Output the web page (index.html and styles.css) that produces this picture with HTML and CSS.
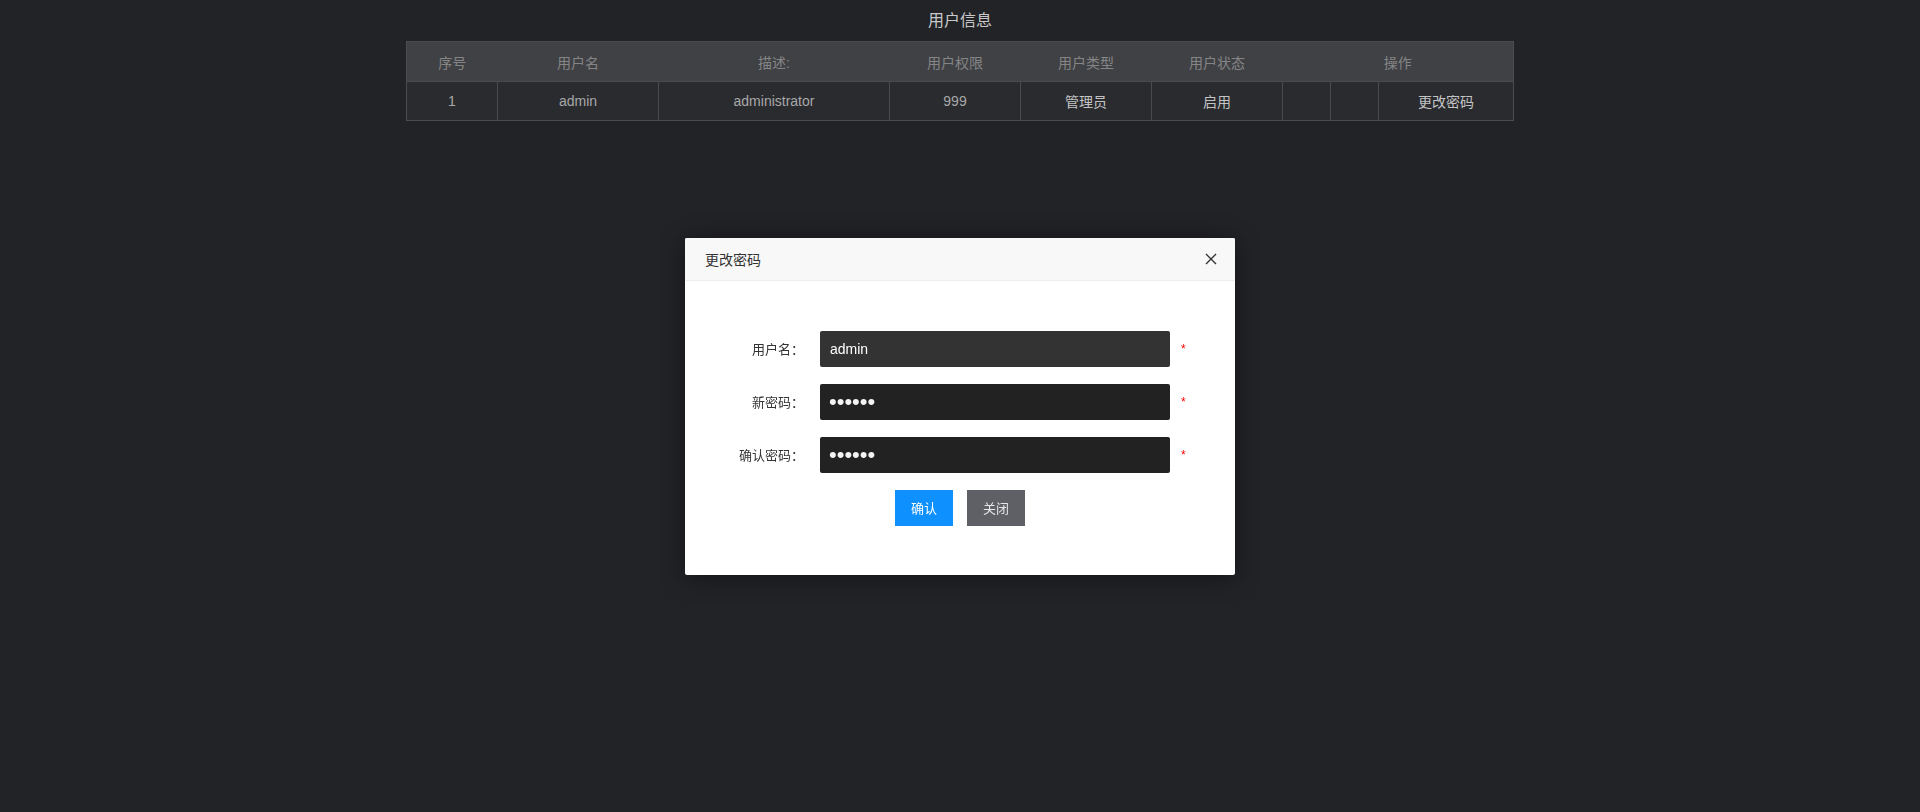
FILE: index.html
```html
<!DOCTYPE html>
<html lang="zh-CN">
<head>
<meta charset="utf-8">
<title>用户信息</title>
<link rel="stylesheet" href="styles.css">
</head>
<body>
<div class="page">
  <h1 class="title">用户信息</h1>
  <table class="users">
    <colgroup>
      <col class="c1"><col class="c2"><col class="c3"><col class="c4"><col class="c5"><col class="c6"><col class="c7"><col class="c8"><col class="c9">
    </colgroup>
    <thead>
      <tr>
        <th>序号</th>
        <th>用户名</th>
        <th>描述:</th>
        <th>用户权限</th>
        <th>用户类型</th>
        <th>用户状态</th>
        <th colspan="3">操作</th>
      </tr>
    </thead>
    <tbody>
      <tr>
        <td>1</td>
        <td>admin</td>
        <td>administrator</td>
        <td>999</td>
        <td class="light">管理员</td>
        <td class="light">启用</td>
        <td></td>
        <td></td>
        <td class="light">更改密码</td>
      </tr>
    </tbody>
  </table>
</div>

<div class="overlay">
  <div class="modal">
    <div class="modal-head">
      <span class="modal-title">更改密码</span>
      <svg class="close" width="12" height="12" viewBox="0 0 12 12"><path d="M1 1 L11 11 M11 1 L1 11" stroke="#333" stroke-width="1.4" fill="none"/></svg>
    </div>
    <div class="modal-body">
      <div class="row">
        <label class="label">用户名：</label>
        <input class="field field-user" type="text" value="admin">
        <span class="req">*</span>
      </div>
      <div class="row">
        <label class="label">新密码：</label>
        <input class="field field-pass" type="password" value="123456">
        <span class="req">*</span>
      </div>
      <div class="row">
        <label class="label">确认密码：</label>
        <input class="field field-pass" type="password" value="123456">
        <span class="req">*</span>
      </div>
      <div class="actions">
        <button class="btn btn-ok">确认</button>
        <button class="btn btn-close">关闭</button>
      </div>
    </div>
  </div>
</div>
</body>
</html>
```
FILE: styles.css
```css
html, body {
  margin: 0;
  padding: 0;
  height: 100%;
}
body {
  background: #222327;
  font-family: "Liberation Sans", "Noto Sans CJK SC", sans-serif;
  color: #aaa;
}
.page {
  padding: 0;
}
.title {
  margin: 0;
  height: 41px;
  line-height: 42px;
  font-size: 16px;
  font-weight: normal;
  text-align: center;
  color: #c8c8c8;
}
.users {
  width: 1107px;
  margin: 0 auto;
  border-collapse: collapse;
  table-layout: fixed;
  border: 1px solid #4a4b4f;
  font-size: 14px;
}
.c1 { width: 91px; }
.c2 { width: 161px; }
.c3 { width: 231px; }
.c4 { width: 131px; }
.c5 { width: 131px; }
.c6 { width: 131px; }
.c7 { width: 48px; }
.c8 { width: 48px; }
.c9 { width: 135px; }
.users th {
  height: 39px;
  padding: 0;
  background: #404145;
  color: #858585;
  font-weight: normal;
  text-align: center;
}
.users td {
  height: 38px;
  padding: 0;
  background: #2a2b2f;
  border: 1px solid #4a4b4f;
  color: #a8a8a8;
  text-align: center;
}
.users td.light {
  color: #c4c4c4;
}
.overlay {
  position: fixed;
  inset: 0;
  display: flex;
  align-items: center;
  justify-content: center;
}
.modal {
  width: 550px;
  background: #fff;
  box-shadow: 0 2px 24px rgba(0, 0, 0, 0.45);
  border-radius: 2px;
}
.modal-head {
  height: 42px;
  background: #f8f8f8;
  border-bottom: 1px solid #eee;
  display: flex;
  align-items: center;
  justify-content: space-between;
  padding: 0 18px 0 20px;
  border-radius: 2px 2px 0 0;
}
.modal-title {
  font-size: 14px;
  color: #333;
}
.close {
  display: block;
}
.modal-body {
  padding: 50px 0 49px;
  display: flex;
  flex-direction: column;
  gap: 17px;
}
.row {
  display: flex;
  align-items: center;
}
.label {
  width: 119px;
  text-align: right;
  margin-right: 16px;
  font-family: "Noto Sans CJK TC", "Noto Sans CJK SC", sans-serif;
  font-size: 13px;
  color: #333;
}
.field {
  width: 350px;
  height: 36px;
  box-sizing: border-box;
  border: none;
  border-radius: 2px;
  background: #222;
  color: #fff;
  padding: 0 10px;
  font-family: "Liberation Sans", sans-serif;
  font-size: 14px;
  outline: none;
}
.field-user {
  background: #333;
}
.field-pass {
  font-size: 22px;
  padding: 0 9px;
  color: #f4f4f4;
}
.req {
  margin-left: 11px;
  color: #f00;
  font-size: 12px;
  margin-top: 1px;
}
.actions {
  display: flex;
  justify-content: center;
  gap: 14px;
}
.btn {
  width: 58px;
  height: 36px;
  border: none;
  border-radius: 0;
  font-family: "Liberation Sans", "Noto Sans CJK SC", sans-serif;
  font-size: 13px;
  color: #fff;
  padding: 0;
}
.btn-ok {
  background: #0e90fe;
}
.btn-close {
  background: #5f6066;
  color: #e6e6e6;
}
```
